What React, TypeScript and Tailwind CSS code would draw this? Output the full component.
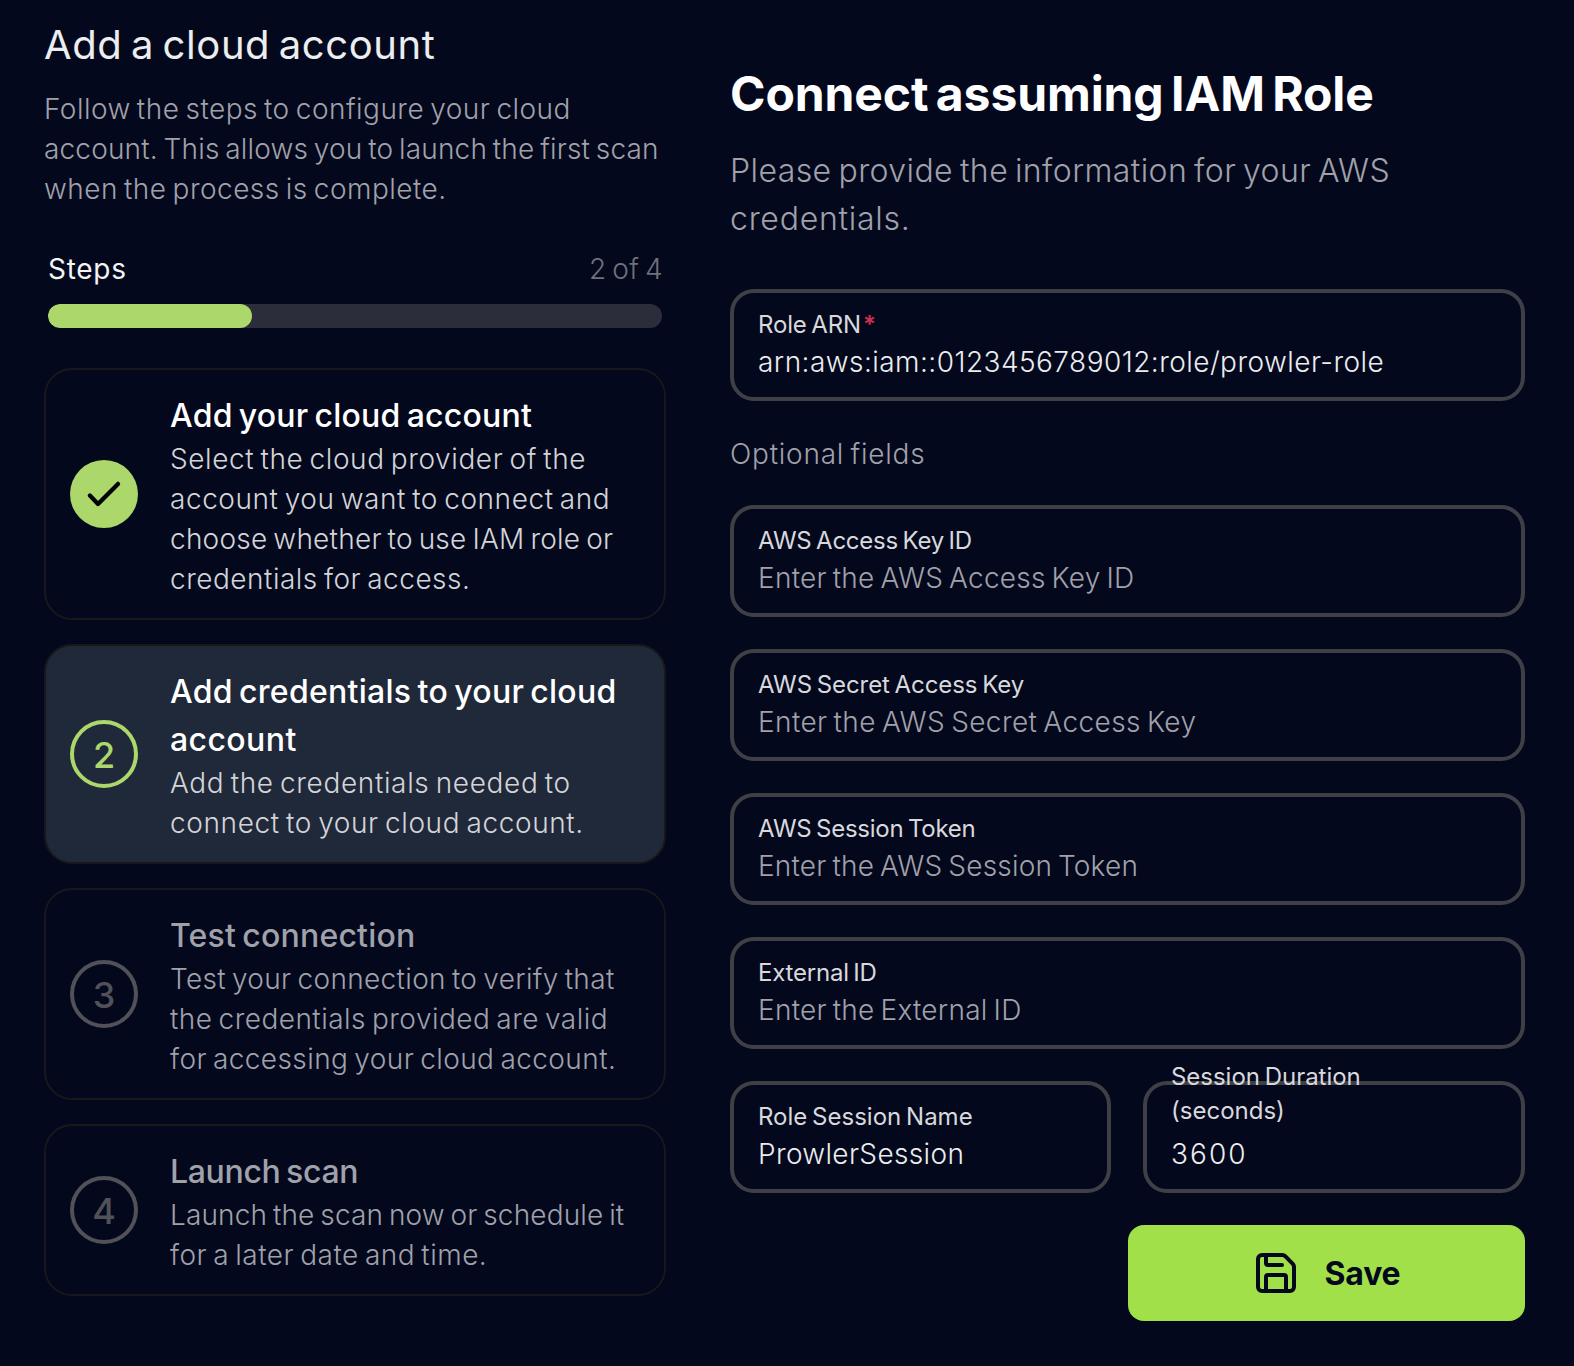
import React from "react";
import { Save } from "lucide-react";

type Line = [text: string, tracking: string];

function Lines({ lines }: { lines: Line[] }) {
  return (
    <>
      {lines.map(([text, tracking]) => (
        <span key={text} className={`block whitespace-nowrap ${tracking}`}>
          {text}
        </span>
      ))}
    </>
  );
}

type StepState = "done" | "current" | "pending";

interface Step {
  state: StepState;
  title: Line[];
  description: Line[];
}

const steps: Step[] = [
  {
    state: "done",
    title: [["Add your cloud account", "tracking-[0.21px]"]],
    description: [
      ["Select the cloud provider of the", "tracking-[0.59px]"],
      ["account you want to connect and", "tracking-[0.56px]"],
      ["choose whether to use IAM role or", "tracking-[0.24px]"],
      ["credentials for access.", "tracking-[0.5px]"],
    ],
  },
  {
    state: "current",
    title: [
      ["Add credentials to your cloud", "tracking-[0.27px]"],
      ["account", "tracking-[0.41px]"],
    ],
    description: [
      ["Add the credentials needed to", "tracking-[0.65px]"],
      ["connect to your cloud account.", "tracking-[0.61px]"],
    ],
  },
  {
    state: "pending",
    title: [["Test connection", "tracking-[0.2px]"]],
    description: [
      ["Test your connection to verify that", "tracking-[0.34px]"],
      ["the credentials provided are valid", "tracking-[0.46px]"],
      ["for accessing your cloud account.", "tracking-[0.41px]"],
    ],
  },
  {
    state: "pending",
    title: [["Launch scan", "tracking-[-0.34px]"]],
    description: [
      ["Launch the scan now or schedule it", "tracking-[0.15px]"],
      ["for a later date and time.", "tracking-[0.5px]"],
    ],
  },
];

function StepMarker({ state, number }: { state: StepState; number: number }) {
  if (state === "done") {
    return (
      <div className="size-[68px] shrink-0 rounded-full bg-[#acd76a] text-black">
        <svg
          viewBox="0 0 68 68"
          fill="none"
          stroke="currentColor"
          strokeWidth="4.3"
          strokeLinecap="round"
          strokeLinejoin="round"
        >
          <path d="M19.9 35.6 28 44 48 23.9" />
        </svg>
      </div>
    );
  }
  const color =
    state === "current" ? "border-[#acd76a] text-[#acd76a]" : "border-[#515157] text-[#515157]";
  return (
    <div
      className={`flex size-[68px] shrink-0 items-center justify-center rounded-full border-4 pt-px text-[36px] leading-none font-medium ${color}`}
    >
      {number}
    </div>
  );
}

function StepCard({ step, number }: { step: Step; number: number }) {
  const pending = step.state === "pending";
  return (
    <li
      className={`flex items-center gap-8 rounded-[28px] border-2 border-[#18181b] px-6 py-5 ${
        step.state === "current" ? "bg-[#202939]" : ""
      }`}
    >
      <StepMarker state={step.state} number={number} />
      <div className="mt-0.5 -mb-px">
        <h3
          className={`text-[32px] leading-[48px] font-medium ${
            pending ? "text-[#a1a1aa]" : "text-white"
          }`}
        >
          <Lines lines={step.title} />
        </h3>
        <p
          className={`-mt-px text-[28px] leading-[40px] font-light ${
            pending ? "text-[#a1a1aa]" : "text-[#d4d4d8]"
          }`}
        >
          <Lines lines={step.description} />
        </p>
      </div>
    </li>
  );
}

interface FieldProps {
  label: Line[];
  value: Line;
  placeholder?: boolean;
  required?: boolean;
}

function Field({ label, value, placeholder, required }: FieldProps) {
  return (
    <div className="flex h-28 flex-col justify-end rounded-[24px] border-4 border-[#3f3f46] px-6 pb-[15px]">
      <div
        className={`flex text-[24px] leading-[34px] text-[#d9d9dc] ${
          label.length > 1 ? "mb-1.5" : ""
        }`}
      >
        <span>
          <Lines lines={label} />
        </span>
        {required && <span className="ml-0.5 font-semibold text-[#cf2f4b]">*</span>}
      </div>
      <div
        className={`text-[28px] leading-[40px] font-light ${
          placeholder ? "text-[#a1a1aa]" : "text-[#ececee]"
        }`}
      >
        <Lines lines={[value]} />
      </div>
    </div>
  );
}

export default function App() {
  return (
    <div className="flex h-[1366px] w-[1574px] items-start gap-16 overflow-hidden bg-[#03081d] pl-11 font-['Inter',sans-serif] [&_*]:[word-spacing:-0.08em]">
      <section className="w-[622px] shrink-0 pt-[17px]">
        <h1 className="text-[40px] leading-[56px] tracking-[0.58px] text-[#ecedee]">
          Add a cloud account
        </h1>
        <p className="mt-4 text-[28px] leading-[40px] font-light text-[#a1a1aa]">
          <Lines
            lines={[
              ["Follow the steps to configure your cloud", "tracking-[0.47px]"],
              ["account. This allows you to launch the first scan", "tracking-[0.16px]"],
              ["when the process is complete.", "tracking-[0.47px]"],
            ]}
          />
        </p>
        <div className="mt-10 px-1">
          <div className="flex justify-between text-[28px] leading-[40px]">
            <span className="tracking-[0.72px] text-[#f4f4f5]">Steps</span>
            <span className="-mr-px font-light tracking-[0.3px] text-[#71717a]">2 of 4</span>
          </div>
          <div className="mt-[15px] h-6 overflow-hidden rounded-xl bg-[#2c2d3a]">
            <div className="h-full w-[204px] rounded-xl bg-[#acd76a]" />
          </div>
        </div>
        <ol className="mt-10 flex flex-col gap-6">
          {steps.map((step, i) => (
            <StepCard key={i} step={step} number={i + 1} />
          ))}
        </ol>
      </section>

      <section className="w-[795px] shrink-0 pt-[62px]">
        <h2 className="text-[48px] leading-[64px] font-bold tracking-[-0.1px] text-white">
          Connect assuming IAM Role
        </h2>
        <p className="mt-[21px] text-[32px] leading-[48px] font-light text-[#a1a1aa]">
          <Lines
            lines={[
              ["Please provide the information for your AWS", "tracking-[0.42px]"],
              ["credentials.", "tracking-[0.74px]"],
            ]}
          />
        </p>
        <div className="mt-[46px]">
          <Field
            label={[["Role ARN", "tracking-[-0.15px]"]]}
            value={["arn:aws:iam::0123456789012:role/prowler-role", "tracking-[0.45px]"]}
            required
          />
        </div>
        <p className="mt-[33px] text-[28px] leading-[40px] font-light tracking-[0.77px] text-[#a1a1aa]">
          Optional fields
        </p>
        <div className="mt-[31px] flex flex-col gap-8">
          <Field
            label={[["AWS Access Key ID", "tracking-[-0.25px]"]]}
            value={["Enter the AWS Access Key ID", "tracking-[0.25px]"]}
            placeholder
          />
          <Field
            label={[["AWS Secret Access Key", "tracking-[-0.08px]"]]}
            value={["Enter the AWS Secret Access Key", "tracking-[0.4px]"]}
            placeholder
          />
          <Field
            label={[["AWS Session Token", "tracking-[-0.26px]"]]}
            value={["Enter the AWS Session Token", "tracking-[0.2px]"]}
            placeholder
          />
          <Field
            label={[["External ID", "tracking-[-0.22px]"]]}
            value={["Enter the External ID", "tracking-[0.26px]"]}
            placeholder
          />
          <div className="grid grid-cols-[381px_382px] gap-8">
            <Field
              label={[["Role Session Name", "tracking-[0px]"]]}
              value={["ProwlerSession", "tracking-[0.35px]"]}
            />
            <Field
              label={[
                ["Session Duration", "tracking-[-0.03px]"],
                ["(seconds)", "tracking-[0px]"],
              ]}
              value={["3600", "tracking-[2.06px]"]}
            />
          </div>
          <button className="flex h-24 w-[397px] items-center justify-center gap-[25px] self-end rounded-[16px] bg-[#a1e049] pr-px text-[32px] leading-[48px] font-bold tracking-[-0.2px] text-[#03081d]">
            <Save className="size-12" strokeWidth={2} />
            <span className="mt-px -mb-px">Save</span>
          </button>
        </div>
      </section>
    </div>
  );
}
